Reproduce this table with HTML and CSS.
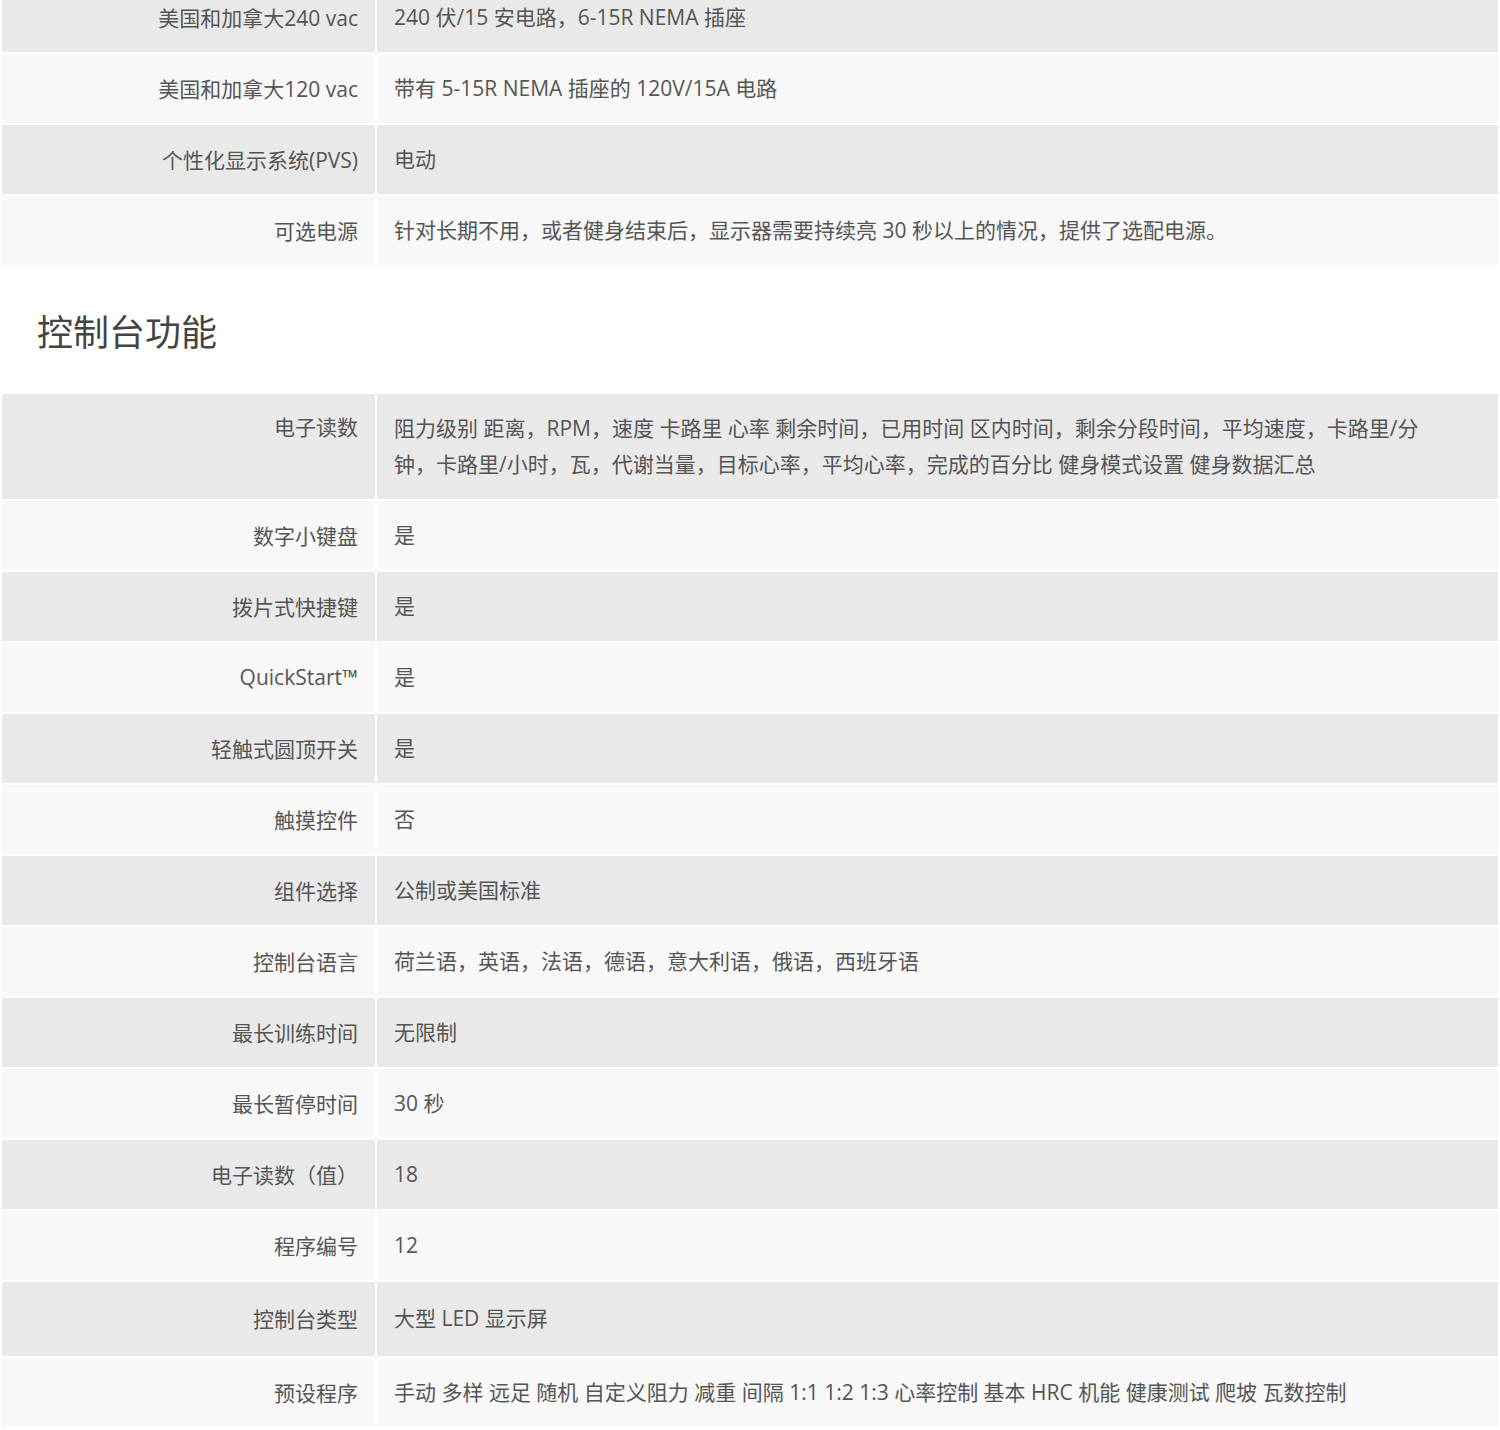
FILE: index.html
```html
<!DOCTYPE html>
<html lang="zh-CN">
<head>
<meta charset="utf-8">
<title>规格</title>
<link rel="stylesheet" href="styles.css">
</head>
<body>
<table class="spec spec-top">
  <tr class="odd"><th>美国和加拿大240 vac</th><td>240 伏/15 安电路，6-15R NEMA 插座</td></tr>
  <tr class="even"><th>美国和加拿大120 vac</th><td>带有 5-15R NEMA 插座的 120V/15A 电路</td></tr>
  <tr class="odd"><th>个性化显示系统(PVS)</th><td>电动</td></tr>
  <tr class="even"><th>可选电源</th><td>针对长期不用，或者健身结束后，显示器需要持续亮 30 秒以上的情况，提供了选配电源。</td></tr>
</table>
<h2 class="section-title">控制台功能</h2>
<table class="spec">
  <tr class="odd tall"><th>电子读数</th><td>阻力级别 距离，RPM，速度 卡路里 心率 剩余时间，已用时间 区内时间，剩余分段时间，平均速度，卡路里/分钟，卡路里/小时，瓦，代谢当量，目标心率，平均心率，完成的百分比 健身模式设置 健身数据汇总</td></tr>
  <tr class="even"><th>数字小键盘</th><td>是</td></tr>
  <tr class="odd"><th>拨片式快捷键</th><td>是</td></tr>
  <tr class="even"><th>QuickStart™</th><td>是</td></tr>
  <tr class="odd"><th>轻触式圆顶开关</th><td>是</td></tr>
  <tr class="even"><th>触摸控件</th><td>否</td></tr>
  <tr class="odd"><th>组件选择</th><td>公制或美国标准</td></tr>
  <tr class="even"><th>控制台语言</th><td>荷兰语，英语，法语，德语，意大利语，俄语，西班牙语</td></tr>
  <tr class="odd"><th>最长训练时间</th><td>无限制</td></tr>
  <tr class="even"><th>最长暂停时间</th><td>30 秒</td></tr>
  <tr class="odd"><th>电子读数（值）</th><td>18</td></tr>
  <tr class="even"><th>程序编号</th><td>12</td></tr>
  <tr class="odd taller"><th>控制台类型</th><td>大型 LED 显示屏</td></tr>
  <tr class="even"><th>预设程序</th><td>手动 多样 远足 随机 自定义阻力 减重 间隔 1:1 1:2 1:3 心率控制 基本 HRC 机能 健康测试 爬坡 瓦数控制</td></tr>
</table>
</body>
</html>
```
FILE: styles.css
```css
html, body {
  margin: 0;
  padding: 0;
  background: #ffffff;
}

body {
  font-family: "Open Sans", "Noto Sans CJK SC", sans-serif;
  color: #555555;
}

.spec {
  width: 100%;
  border-collapse: separate;
  border-spacing: 2px;
  font-size: 21px;
}

.spec-top {
  margin-top: -19px;
}

.spec tr {
  height: 69px;
}

.spec tr.tall {
  height: 105px;
}

.spec tr.taller {
  height: 74px;
}

.spec th {
  width: 373px;
  box-sizing: border-box;
  padding: 0 17px 2px 10px;
  text-align: right;
  font-weight: normal;
  vertical-align: middle;
  white-space: nowrap;
}

.spec td {
  padding: 0 40px 2px 17px;
  text-align: left;
  vertical-align: middle;
  line-height: 36px;
}

.spec tr.tall th {
  vertical-align: top;
  padding-top: 15px;
  line-height: 36px;
}

.spec tr.odd th,
.spec tr.odd td {
  background: #e9e9e9;
}

.spec tr.even th,
.spec tr.even td {
  background: #f8f8f8;
}

.section-title {
  margin: 0;
  padding: 44px 0 37px 37px;
  font-size: 36px;
  line-height: 44px;
  font-weight: normal;
  color: #444444;
}
```
